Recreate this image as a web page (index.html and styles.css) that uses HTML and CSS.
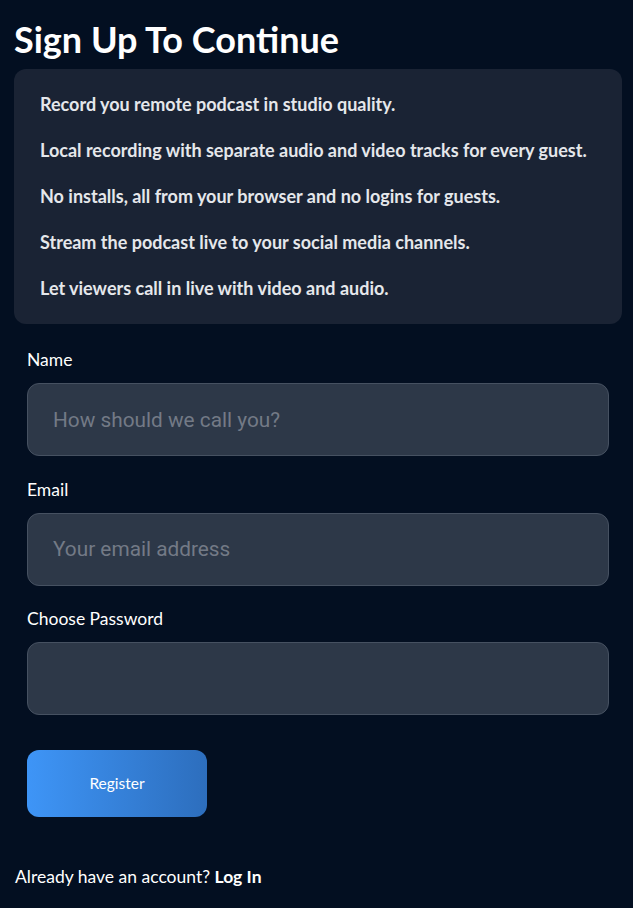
FILE: index.html
```html
<!DOCTYPE html>
<html lang="en">
<head>
    <meta charset="UTF-8">
    <meta name="viewport" content="width=device-width, initial-scale=1.0">
    <title>Sign Up</title>
    <link rel="stylesheet" href="styles.css">
</head>
<body>
    <h1>Sign Up To Continue</h1>

    <div class="features">
        <p>Record you remote podcast in studio quality.</p>
        <p>Local recording with separate audio and video tracks for every guest.</p>
        <p>No installs, all from your browser and no logins for guests.</p>
        <p>Stream the podcast live to your social media channels.</p>
        <p>Let viewers call in live with video and audio.</p>
    </div>

    <form class="signup">
        <label for="name">Name</label>
        <input id="name" type="text" placeholder="How should we call you?">

        <label for="email">Email</label>
        <input id="email" type="email" placeholder="Your email address">

        <label for="password">Choose Password</label>
        <input id="password" type="password">

        <button type="button">Register</button>
    </form>

    <p class="login">Already have an account? <a href="#">Log In</a></p>
</body>
</html>
```

FILE: styles.css
```css
body { font-family: Lato, "Open Sans", sans-serif; margin: 0; padding: 0 11px 0 14px; background-color: #030f21; color: #fff; }
h1 { font-size: 36px; font-weight: 700; margin: 0; padding: 18px 0 9px; line-height: 42px; }
.features { background: #1a2334; border-radius: 12px; padding: 23px 26px 24px; }
.features p { margin: 0 0 22px; font-size: 18px; font-weight: 700; line-height: 24px; color: #e5e7eb; }
.features p:last-child { margin-bottom: 0; }
.signup { display: flex; flex-direction: column; align-items: flex-start; padding: 24px 13px 0; }
.signup label { font-size: 17.5px; line-height: 24px; margin-bottom: 11px; }
.signup input { box-sizing: border-box; width: 100%; height: 73px; margin-bottom: 21.5px; padding: 0 25px; background: #2d3848; border: 1px solid #465161; border-radius: 12px; color: #fff; font-family: Roboto, sans-serif; font-size: 20.8px; outline: none; }
.signup input::placeholder { color: #737a86; }
.signup button { margin-top: 13.5px; width: 180px; height: 67px; padding-bottom: 3px; border: none; border-radius: 12px; background: linear-gradient(90deg, #3e95f7, #2d6ebd); color: #fff; font-family: Lato, sans-serif; font-size: 15.5px; cursor: pointer; }
.login { margin: 48px 0 0 1px; font-size: 17.5px; line-height: 24px; }
.login a { color: #fff; font-weight: 700; text-decoration: none; }
```
